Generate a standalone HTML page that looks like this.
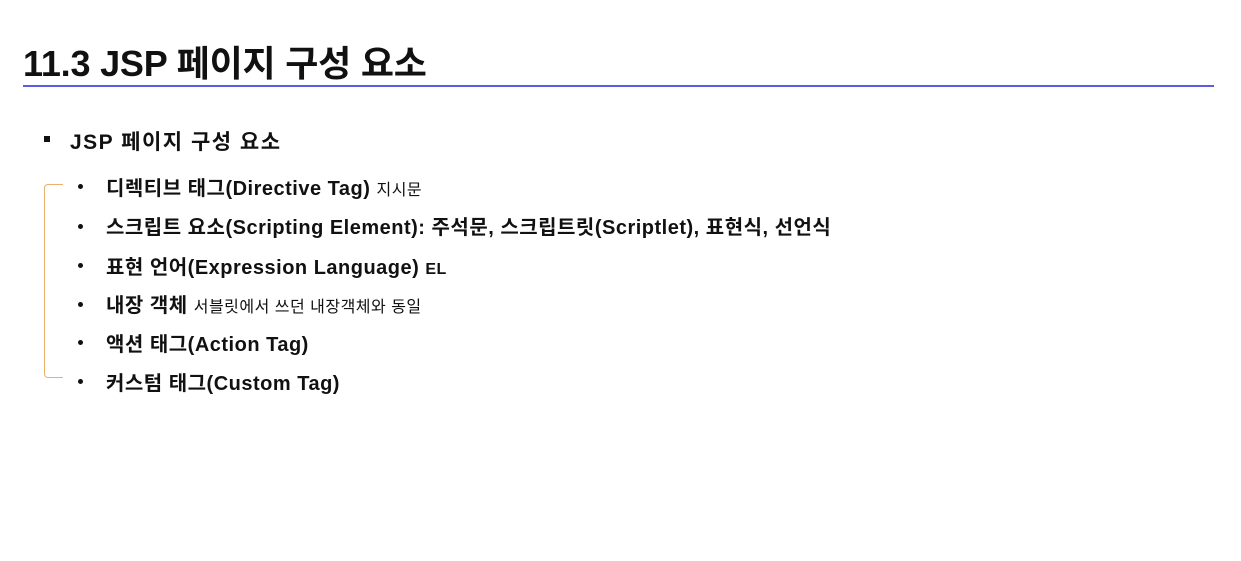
<!DOCTYPE html>
<html><head><meta charset="utf-8"><style>
html,body{margin:0;padding:0;background:#fff;width:1241px;height:561px;overflow:hidden}
body{font-family:"Liberation Sans","Noto Sans CJK KR",sans-serif;color:#111;position:relative}
.t{position:absolute;left:23px;top:35px;font-size:36px;font-weight:bold;letter-spacing:-0.2px;white-space:nowrap}
.line{position:absolute;left:23px;top:85px;width:1191px;height:2px;background:#5b5be6}
.h{position:absolute;left:70px;top:126px;font-size:21px;font-weight:bold;letter-spacing:1.5px;white-space:nowrap}
.sq{position:absolute;left:44px;top:136px;width:6px;height:6px;background:#111}
.it{position:absolute;left:106px;font-size:20px;font-weight:bold;letter-spacing:0.5px;white-space:nowrap}
.it small{font-size:16px;font-weight:normal;letter-spacing:0.5px}
.dot{position:absolute;left:78px;width:5px;height:5px;border-radius:50%;background:#111}
.br{position:absolute;left:44px;top:184px;width:18px;height:192px;border:1.5px solid #eab070;border-right:none;border-radius:4px 0 0 4px}
</style></head><body>
<div class="t">11.3 JSP 페이지 구성 요소</div>
<div class="line"></div>
<div class="sq"></div>
<div class="h">JSP 페이지 구성 요소</div>
<div class="br"></div>
<div class="dot" style="top:184px"></div><div class="it" style="top:172px">디렉티브 태그(Directive Tag) <small>지시문</small></div>
<div class="dot" style="top:224px"></div><div class="it" style="top:211px">스크립트 요소(Scripting Element): 주석문, 스크립트릿(Scriptlet), 표현식, 선언식</div>
<div class="dot" style="top:263px"></div><div class="it" style="top:251px">표현 언어(Expression Language) <small style="font-weight:bold">EL</small></div>
<div class="dot" style="top:302px"></div><div class="it" style="top:289px">내장 객체 <small>서블릿에서 쓰던 내장객체와 동일</small></div>
<div class="dot" style="top:340px"></div><div class="it" style="top:328px">액션 태그(Action Tag)</div>
<div class="dot" style="top:379px"></div><div class="it" style="top:367px">커스텀 태그(Custom Tag)</div>
</body></html>
